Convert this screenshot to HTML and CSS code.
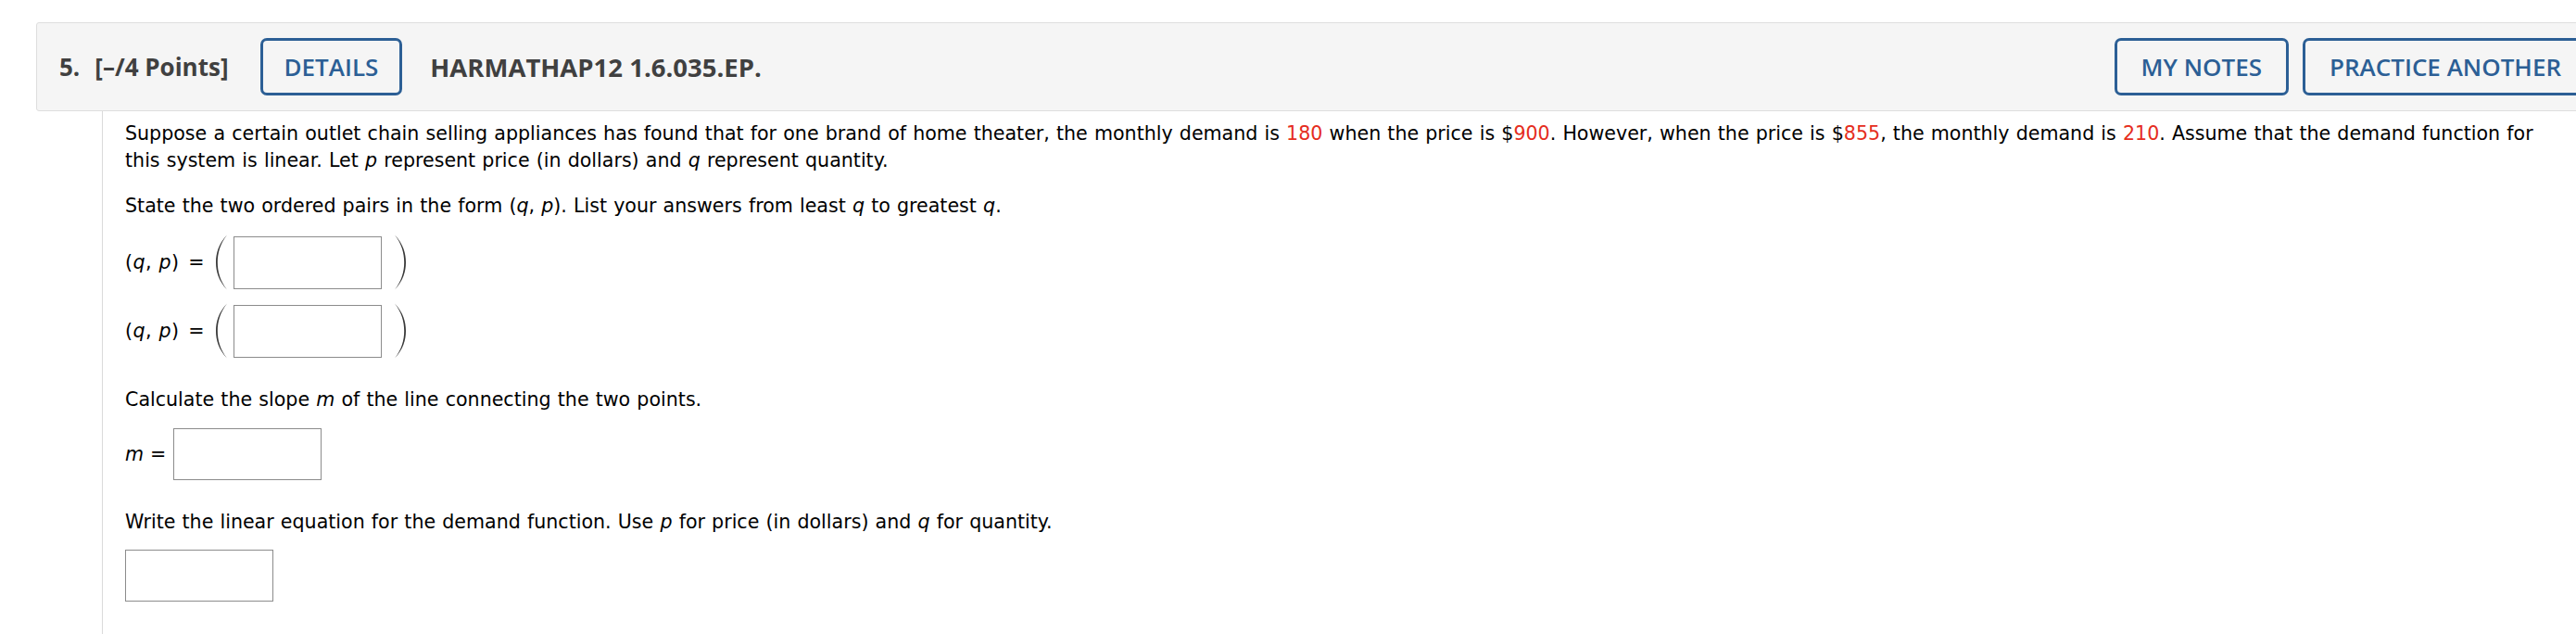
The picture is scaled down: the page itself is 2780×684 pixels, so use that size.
FILE: index.html
```html
<!DOCTYPE html>
<html lang="en">
<head>
<meta charset="utf-8">
<title>Question 5</title>
<link rel="stylesheet" href="styles.css">
</head>
<body>
<div class="question">
  <div class="qhead">
    <div class="qnum"><span class="num">5.</span><span class="pts">[–/4 Points]</span></div>
    <button class="btn btn-details">DETAILS</button>
    <div class="qtitle">HARMATHAP12 1.6.035.EP.</div>
    <div class="actions">
      <button class="btn">MY NOTES</button>
      <button class="btn">PRACTICE ANOTHER</button>
    </div>
  </div>
  <div class="qbody">
    <p class="para first">Suppose a certain outlet chain selling appliances has found that for one brand of home theater, the monthly demand is <span class="red">180</span> when the price is $<span class="red">900</span>. However, when the price is $<span class="red">855</span>, the monthly demand is <span class="red">210</span>. Assume that the demand function for this system is linear. Let <i>p</i> represent price (in dollars) and <i>q</i> represent quantity.</p>
    <p class="para">State the two ordered pairs in the form (<i>q</i>, <i>p</i>). List your answers from least <i>q</i> to greatest <i>q</i>.</p>
    <div class="pairs">
      <div class="pair">
        <span class="lbl">(<i>q</i>, <i>p</i>)</span><span class="eq">=</span>
        <svg class="paren" viewBox="0 0 16 60" width="16" height="60"><path d="M15,0.5 C6,10 3,20 3,30 C3,40 6,50 15,59.5 C7.6,50 4.8,40 4.8,30 C4.8,20 7.6,10 15,0.5 Z"/></svg>
        <span class="box"></span>
        <svg class="paren rp" viewBox="0 0 16 60" width="16" height="60"><path d="M1,0.5 C10,10 13,20 13,30 C13,40 10,50 1,59.5 C8.4,50 11.2,40 11.2,30 C11.2,20 8.4,10 1,0.5 Z"/></svg>
      </div>
      <div class="pair">
        <span class="lbl">(<i>q</i>, <i>p</i>)</span><span class="eq">=</span>
        <svg class="paren" viewBox="0 0 16 60" width="16" height="60"><path d="M15,0.5 C6,10 3,20 3,30 C3,40 6,50 15,59.5 C7.6,50 4.8,40 4.8,30 C4.8,20 7.6,10 15,0.5 Z"/></svg>
        <span class="box"></span>
        <svg class="paren rp" viewBox="0 0 16 60" width="16" height="60"><path d="M1,0.5 C10,10 13,20 13,30 C13,40 10,50 1,59.5 C8.4,50 11.2,40 11.2,30 C11.2,20 8.4,10 1,0.5 Z"/></svg>
      </div>
    </div>
    <p class="para gap">Calculate the slope <i>m</i> of the line connecting the two points.</p>
    <div class="mrow"><i>m</i><span class="eq">=</span><span class="box"></span></div>
    <p class="para gap2">Write the linear equation for the demand function. Use <i>p</i> for price (in dollars) and <i>q</i> for quantity.</p>
    <div class="lastrow"><span class="box"></span></div>
  </div>
</div>
</body>
</html>
```
FILE: styles.css
```css
html, body {
  margin: 0;
  padding: 0;
  overflow: hidden;
  background: #fff;
}

body {
  width: 2780px;
  height: 684px;
}

.question {
  margin: 24px -25px 0 39px;
}

.qhead {
  display: flex;
  align-items: center;
  gap: 34px;
  background: #f5f5f5;
  border: 1px solid #dedede;
  border-radius: 3px;
  padding: 16px 11px 16px 24px;
  font-family: "Open Sans", "Liberation Sans", sans-serif;
  font-size: 26px;
  color: #404040;
}

.qnum {
  font-weight: 700;
  white-space: nowrap;
}

.qnum .num {
  margin-right: 16px;
}

.qtitle {
  font-weight: 700;
  font-size: 27.5px;
  margin-left: -4px;
  white-space: nowrap;
}

.btn {
  font-family: "Open Sans", "Liberation Sans", sans-serif;
  font-size: 26px;
  font-weight: 600;
  color: #2c5f95;
  background: transparent;
  border: 3px solid #2c5f95;
  border-radius: 7px;
  height: 62px;
  padding: 0 26px;
  line-height: 56px;
  white-space: nowrap;
  box-sizing: border-box;
}

.btn-details {
  padding: 0 23px;
}

.actions {
  margin-left: auto;
  display: flex;
  gap: 15px;
}

.qbody {
  margin-left: 71px;
  border-left: 1px solid #dadada;
  padding: 10px 40px 60px 24px;
  font-family: "DejaVu Sans", Verdana, sans-serif;
  font-size: 20.6px;
  line-height: 29px;
  color: #000;
  word-spacing: 0.6px;
}

.para {
  margin: 20px 0 0 0;
}

.para.first {
  margin-top: 0;
}

.para.gap {
  margin-top: 30px;
}

.para.gap2 {
  margin-top: 31px;
}

.red {
  color: #e52d20;
}

.pairs {
  margin-top: 16px;
  display: flex;
  flex-direction: column;
  gap: 14px;
}

.pair {
  display: flex;
  align-items: center;
  height: 60px;
}

.lbl {
  white-space: nowrap;
  letter-spacing: 0.4px;
}

.eq {
  margin: 0 9px 0 10px;
}

.paren {
  display: block;
  fill: #3a3a3a;
  margin-right: 6px;
}

.paren.rp {
  margin: 0 0 0 13px;
}

.box {
  display: block;
  width: 160px;
  height: 57px;
  box-sizing: border-box;
  border: 1px solid #8c8c8c;
  background: #fff;
}

.mrow {
  margin-top: 16px;
  display: flex;
  align-items: center;
  height: 56px;
}

.mrow .eq {
  margin: 0 8px 0 7px;
}

.mrow .box {
  height: 56px;
}

.lastrow {
  margin-top: 15px;
}

.lastrow .box {
  height: 56px;
}
```
